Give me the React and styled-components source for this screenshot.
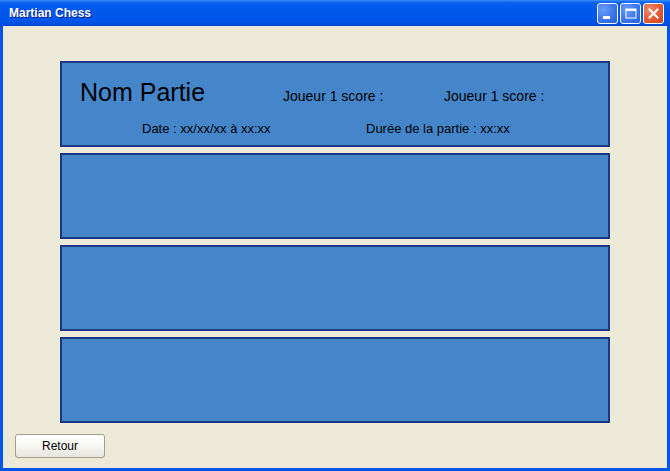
import React from "react";
import styled, { createGlobalStyle } from "styled-components";

const GlobalStyle = createGlobalStyle`
  html, body {
    margin: 0;
    padding: 0;
    background: #ece9d8;
    font-family: "Liberation Sans", Arial, sans-serif;
  }
`;

const Window = styled.div`
  width: 670px;
  height: 471px;
  display: flex;
  flex-direction: column;
  box-sizing: border-box;
  background: #0055e5;
  overflow: hidden;
`;

const TitleBar = styled.div`
  height: 26px;
  flex: none;
  display: flex;
  align-items: center;
  padding: 0 6px 0 9px;
  background: linear-gradient(
    to bottom,
    #3c8dfb 0%,
    #0a62f0 10%,
    #0058ee 35%,
    #0056ea 80%,
    #0049d6 100%
  );
`;

const Title = styled.div`
  flex: 1;
  color: #fff;
  font-weight: bold;
  font-size: 12px;
  margin-top: -1px;
  text-shadow: 1px 1px 0 #0a1e8a;
`;

const Controls = styled.div`
  display: flex;
  gap: 2px;
  padding-top: 1px;
`;

const WinButton = styled.div`
  width: 21px;
  height: 21px;
  box-sizing: border-box;
  border: 1px solid #fff;
  border-radius: 3px;
  display: flex;
  align-items: center;
  justify-content: center;
  background: ${(p) =>
    p.$close
      ? "radial-gradient(circle at 30% 30%, #f08a6a 0%, #e25a34 55%, #c9421f 100%)"
      : "radial-gradient(circle at 30% 30%, #6d9cf6 0%, #3b76ee 55%, #245fdc 100%)"};
`;

const Client = styled.div`
  flex: 1;
  margin: 0 3px 3px 3px;
  background: #ece9d8;
  display: flex;
  flex-direction: column;
  padding: 35px 0 0 0;
`;

const List = styled.div`
  display: flex;
  flex-direction: column;
  gap: 6px;
  margin-left: 57px;
  width: 550px;
`;

const Panel = styled.div`
  height: 86px;
  box-sizing: border-box;
  border: 2px solid #1d3683;
  background: #4586cb;
  color: #000;
`;

const Row = styled.div`
  display: grid;
  grid-template-columns: ${(p) => p.$cols};
  align-items: baseline;
  padding-left: ${(p) => p.$left}px;
  margin-top: ${(p) => p.$top}px;
  height: ${(p) => p.$h}px;
`;

const Name = styled.span`
  font-size: 25px;
  line-height: 28px;
`;

const Score = styled.span`
  font-size: 14px;
  line-height: 16px;
`;

const Info = styled.span`
  font-size: 13px;
  line-height: 16px;
`;

const Footer = styled.div`
  margin: 11px 0 0 12px;
`;

const Button = styled.button`
  width: 90px;
  height: 24px;
  border: 1px solid #a39d8a;
  border-radius: 3px;
  background: linear-gradient(to bottom, #ffffff 0%, #f6f6f3 50%, #e6e5df 100%);
  font-family: "Liberation Sans", Arial, sans-serif;
  font-size: 12px;
  color: #000;
  padding: 0;
`;

const MinIcon = () => (
  <svg width="13" height="13" viewBox="0 0 13 13">
    <rect x="2" y="9" width="7" height="3" fill="#fff" />
  </svg>
);

const MaxIcon = () => (
  <svg width="13" height="13" viewBox="0 0 13 13">
    <rect x="2" y="2" width="10" height="9" fill="none" stroke="#fff" strokeWidth="1" />
    <rect x="2" y="2" width="10" height="2" fill="#fff" />
  </svg>
);

const CloseIcon = () => (
  <svg width="13" height="13" viewBox="0 0 13 13">
    <path d="M2.5 2.5 L10.5 10.5 M10.5 2.5 L2.5 10.5" stroke="#fff" strokeWidth="2" strokeLinecap="square" />
  </svg>
);

const GamePanel = ({ game }) => (
  <Panel>
    {game && (
      <>
        <Row $cols="203px 161px 1fr" $left={18} $top={15} $h={28}>
          <Name>{game.name}</Name>
          <Score>Joueur 1 score :</Score>
          <Score>Joueur 1 score :</Score>
        </Row>
        <Row $cols="224px 1fr" $left={80} $top={15} $h={16}>
          <Info>Date : xx/xx/xx à xx:xx</Info>
          <Info>Durée de la partie : xx:xx</Info>
        </Row>
      </>
    )}
  </Panel>
);

const games = [{ name: "Nom Partie" }, null, null, null];

export default function App() {
  return (
    <>
      <GlobalStyle />
      <Window>
        <TitleBar>
          <Title>Martian Chess</Title>
          <Controls>
            <WinButton>
              <MinIcon />
            </WinButton>
            <WinButton>
              <MaxIcon />
            </WinButton>
            <WinButton $close>
              <CloseIcon />
            </WinButton>
          </Controls>
        </TitleBar>
        <Client>
          <List>
            {games.map((g, i) => (
              <GamePanel key={i} game={g} />
            ))}
          </List>
          <Footer>
            <Button>Retour</Button>
          </Footer>
        </Client>
      </Window>
    </>
  );
}
